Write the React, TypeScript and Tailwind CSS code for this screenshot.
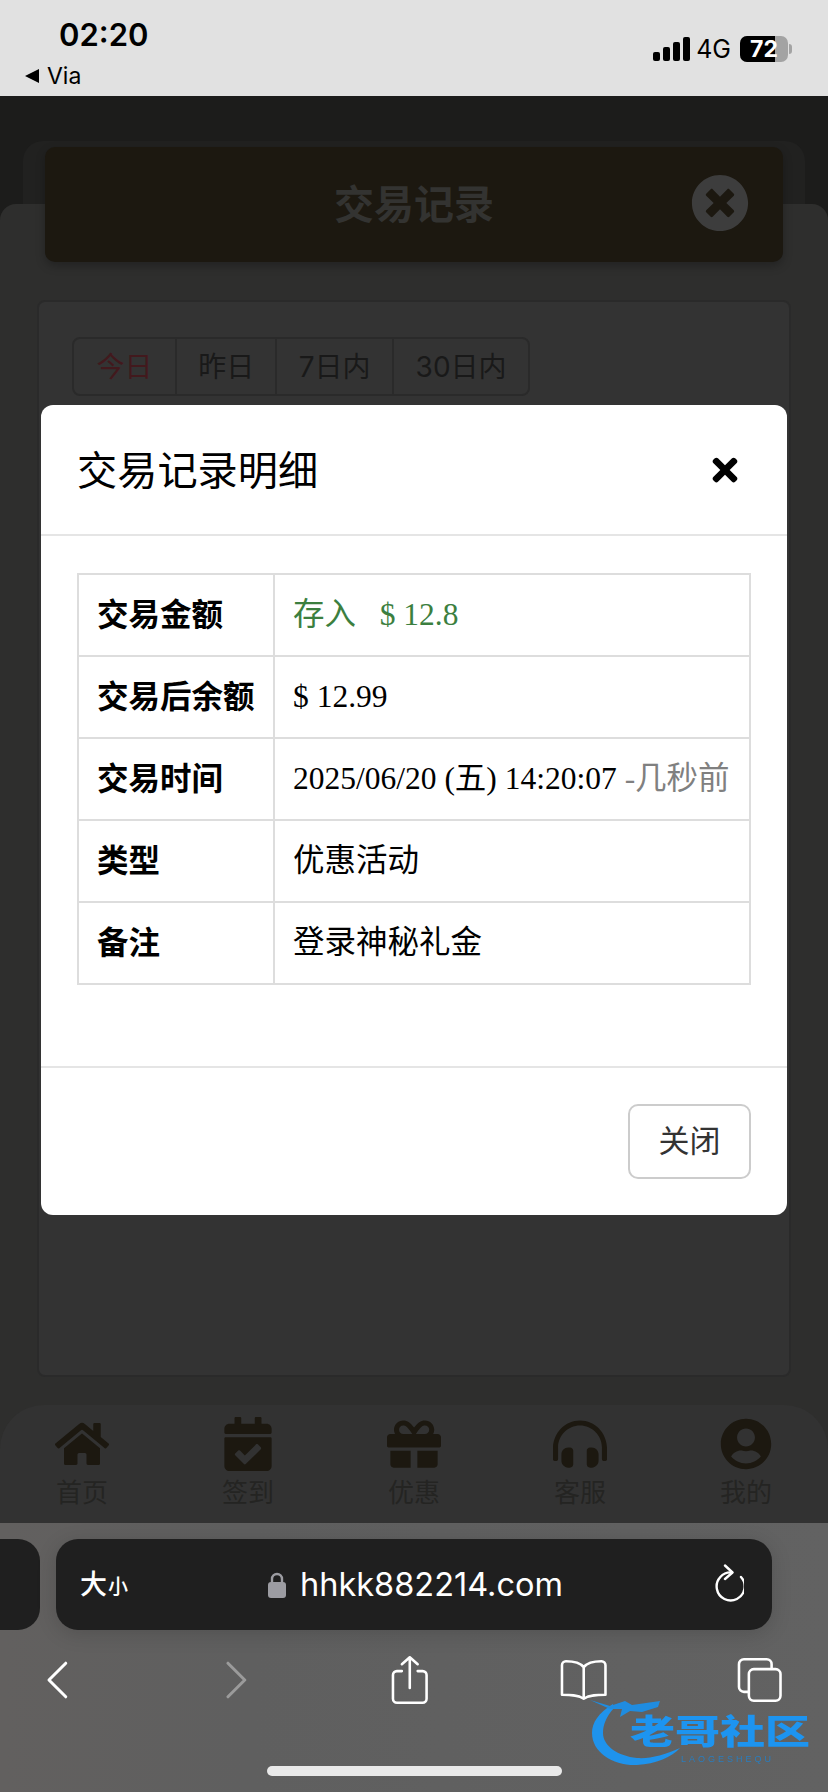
import { FaCalendarCheck, FaGift, FaHeadphonesAlt, FaHome, FaTimes, FaTimesCircle, FaUserCircle } from 'react-icons/fa';

const sans = "font-['Inter','Noto_Sans_CJK_SC',sans-serif]";

const navItems = [
  { label: '首页', Icon: FaHome, size: 'text-[54px]' },
  { label: '签到', Icon: FaCalendarCheck, size: 'text-[54px]' },
  { label: '优惠', Icon: FaGift, size: 'text-[54px]' },
  { label: '客服', Icon: FaHeadphonesAlt, size: 'text-[54px]' },
  { label: '我的', Icon: FaUserCircle, size: 'text-[52px]' },
];

const tabs = [
  { label: '今日', width: 'w-[104px]', color: 'text-[#42191d]' },
  { label: '昨日', width: 'w-[101px]', color: 'text-[#191919]' },
  { label: '7日内', width: 'w-[118px]', color: 'text-[#191919]' },
  { label: '30日内', width: 'w-[135px]', color: 'text-[#191919]' },
];

function StatusBar() {
  return (
    <div className="relative flex h-[96px] shrink-0 justify-between bg-[#e1e1e1] text-black">
      <div className="pl-[25px]">
        <div className="mt-[15px] pl-[34px] text-[31px] leading-[40px] font-semibold">02:20</div>
        <div className="mt-[8px] flex items-center gap-[8px] text-[23px] leading-[26px]">
          <span className="h-0 w-0 border-y-[7px] border-r-[14px] border-y-transparent border-r-black" />
          <span>Via</span>
        </div>
      </div>
      <div className="flex h-[62px] items-end pr-[36px]">
        <svg width="37" height="24" viewBox="0 0 37 24" className="mb-[1px]">
          <rect x="0" y="15" width="7" height="9" rx="2" />
          <rect x="10" y="10" width="7" height="14" rx="2" />
          <rect x="20" y="5" width="7" height="19" rx="2" />
          <rect x="30" y="0" width="7" height="24" rx="2" />
        </svg>
        <span className="ml-[6px] text-[25px] leading-[26px]">4G</span>
        <div className="relative ml-[9px] flex h-[26px] w-[48px] overflow-hidden rounded-[7px] bg-[#a3a3a3]">
          <div className="h-full w-[35px] bg-black" />
          <span className="absolute left-[10px] top-0 text-[23px] leading-[26px] font-bold text-white">72</span>
        </div>
        <div className="mb-[8px] ml-[1px] h-[10px] w-[3px] rounded-r-[3px] bg-[#a3a3a3]" />
      </div>
    </div>
  );
}

function PageBehind() {
  return (
    <div className="flex-1 bg-[#1c1c1b] pt-[45px]">
      <div className="mx-[23px] h-[63px] rounded-t-[20px] bg-[#212120]" />
      <div className="flex flex-col rounded-t-[16px] bg-[#2e2e2d]">
        <div className="relative mx-[45px] -mt-[57px] flex h-[115px] items-center justify-center rounded-[10px] bg-[#1c1810] shadow-[0_4px_10px_rgba(0,0,0,0.25)]">
          <span className="text-[40px] font-bold text-[#333331]">交易记录</span>
          <FaTimesCircle className="absolute right-[34px] top-[27px] text-[58px] text-[#3d3d3d]" />
        </div>
        <div className="mx-[37px] mt-[38px] h-[1077px] rounded-[8px] border-2 border-[#2a2a2a] bg-[#333333] px-[33px] pt-[35px]">
          <div className="flex h-[59px] w-[458px] rounded-[8px] border-2 border-[#2a2a2a]">
            {tabs.map((tab) => (
              <div key={tab.label} className={`flex items-center justify-center border-r-2 border-[#2a2a2a] text-[28px] last:border-r-0 ${tab.width} ${tab.color}`}>
                {tab.label}
              </div>
            ))}
          </div>
        </div>
        <div className="mt-[28px] flex h-[118px] justify-between rounded-t-[44px] bg-[#323232] px-[21px] pt-[10px]">
          {navItems.map(({ label, Icon, size }) => (
            <div key={label} className="flex w-[122px] flex-col items-center">
              <div className="flex h-[58px] items-center">
                <Icon className={`${size} text-[#1c1810]`} />
              </div>
              <span className="mt-[4px] text-[26px] leading-[32px] text-[#242422]">{label}</span>
            </div>
          ))}
        </div>
      </div>
    </div>
  );
}

function BrowserChrome() {
  return (
    <div className="relative h-[269px] shrink-0 bg-[linear-gradient(90deg,#62605f_0%,#5f5f5f_30%,#626262_100%)] pt-[16px] text-white">
      <div className="flex h-[91px] gap-[16px]">
        <div className="h-full w-[40px] rounded-r-[22px] bg-[#1f1f1f]" />
        <div className="relative flex h-full w-[716px] items-center justify-center rounded-[22px] bg-[#1f1f1f] shadow-[0_4px_20px_rgba(0,0,0,0.15)]">
          <div className="absolute left-[24px] top-[30px] flex items-end gap-[1px] font-['Noto_Sans_CJK_SC',sans-serif] leading-none font-medium">
            <span className="text-[27px]">大</span>
            <span className="text-[20px]">小</span>
          </div>
          <div className="flex items-center gap-[14px] pl-[3px]">
            <svg width="18" height="26" viewBox="0 0 18 26" fill="#9c9ca2">
              <path d="M4 11V7a5 5 0 0 1 10 0v4" fill="none" stroke="#9c9ca2" strokeWidth="2.4" />
              <rect x="0" y="10" width="18" height="16" rx="3" />
            </svg>
            <span className="text-[32.5px] leading-[40px]">hhkk882214.com</span>
          </div>
          <svg width="32" height="38" viewBox="0 0 32 38" fill="none" stroke="white" strokeWidth="2.4" strokeLinecap="round" strokeLinejoin="round" className="absolute right-[28px] top-[25px]">
            <path d="M20 8.5A14 14 0 1 0 29 13" />
            <path d="M13 1.5l7.5 7-7.5 6.5" />
          </svg>
        </div>
      </div>
      <div className="mt-[25px] flex h-[50px] w-[828px] items-center px-[46px]">
        <svg width="22" height="38" viewBox="0 0 22 38" fill="none" stroke="white" strokeWidth="3" strokeLinecap="round" strokeLinejoin="round">
          <path d="M20 2L3 19l17 17" />
        </svg>
        <svg width="22" height="38" viewBox="0 0 22 38" fill="none" stroke="#9b9b9b" strokeWidth="3" strokeLinecap="round" strokeLinejoin="round" className="ml-[158px]">
          <path d="M2 2l17 17L2 36" />
        </svg>
        <svg width="40" height="50" viewBox="0 0 40 50" fill="none" stroke="white" strokeWidth="2.6" strokeLinecap="round" strokeLinejoin="round" className="ml-[142px]">
          <path d="M12 16H7a4 4 0 0 0-4 4v24a4 4 0 0 0 4 4h26a4 4 0 0 0 4-4V20a4 4 0 0 0-4-4h-5" />
          <path d="M20 33V2M12 9l8-7 8 7" />
        </svg>
        <svg width="48" height="42" viewBox="0 0 48 42" fill="none" stroke="white" strokeWidth="2.6" strokeLinecap="round" strokeLinejoin="round" className="ml-[131px]">
          <path d="M24 8C20 3 14 2 6 2a4 4 0 0 0-4 4v30c8 0 16 0 22 4 6-4 14-4 22-4V6a4 4 0 0 0-4-4c-8 0-14 1-18 6zM24 8v32" />
        </svg>
        <svg width="46" height="46" viewBox="0 0 46 46" fill="none" stroke="white" strokeWidth="2.6" strokeLinejoin="round" className="ml-[129px]">
          <rect x="12" y="12" width="32" height="32" rx="5" />
          <path d="M12 35H7a5 5 0 0 1-5-5V7a5 5 0 0 1 5-5h23a5 5 0 0 1 5 5v5" />
        </svg>
      </div>
      <div className="mx-auto mt-[61px] h-[10px] w-[295px] rounded-full bg-[#e9e9e9]" />
      <div className="absolute left-[590px] top-[176px] h-[68px] w-[224px] blur-[0.7px]">
        <svg width="120" height="68" viewBox="0 0 120 68" className="absolute left-0 top-0">
          <path d="M23 5C8 14 2 24 2 34c0 20 22 33 45 32 19-1 35-8 43-17-16 7-30 11-43 10C28 57 13 47 13 34c0-8 3-16 11-25z" fill="#1f93ec" />
          <path d="M0 1l20 6 15-5 7 4 28-4-2 6-16 5-12-1-10 6 2-8-12 0z" fill="#1f8ce0" />
        </svg>
        <span className="absolute left-[40px] top-[16px] origin-center scale-y-[0.75] font-['Noto_Sans_CJK_SC',sans-serif] text-[45px] leading-[30px] font-black whitespace-nowrap text-[#1d94f0]">老哥社区</span>
        <span className="absolute left-[91px] top-[56px] font-['Liberation_Sans',sans-serif] text-[9px] leading-[9px] tracking-[3px] text-[#2a7dbd]">LAOGESHEQU</span>
      </div>
    </div>
  );
}

function DetailRow({ label, children }: { label: string; children: React.ReactNode }) {
  return (
    <tr className="h-[82px]">
      <th className={`w-[196px] border-2 border-[#dddddd] pl-[18px] text-left text-[31.5px] font-bold whitespace-nowrap ${sans}`}>{label}</th>
      <td className="border-2 border-[#dddddd] pl-[18px] text-[31.5px] whitespace-nowrap">{children}</td>
    </tr>
  );
}

function DetailModal() {
  return (
    <div className="absolute left-[41px] top-[405px] flex h-[810px] w-[746px] flex-col rounded-[12px] bg-white text-black">
      <div className="flex h-[131px] items-center justify-between border-b-2 border-[#e5e5e5] pl-[36px] pr-[44px]">
        <span className="pt-[2px] text-[40.2px] leading-[50px]">交易记录明细</span>
        <FaTimes className="text-[36px]" />
      </div>
      <div className="flex-1 pl-[36px] pt-[37px]">
        <table className="w-[674px] border-collapse font-['Liberation_Serif','Noto_Sans_CJK_SC',serif]">
          <tbody>
            <DetailRow label="交易金额">
              <span className="text-[#3c7f3f]">存入&nbsp;&nbsp; $ 12.8</span>
            </DetailRow>
            <DetailRow label="交易后余额">$ 12.99</DetailRow>
            <DetailRow label="交易时间">
              2025/06/20 (五) 14:20:07 <span className="text-[#808080]">-几秒前</span>
            </DetailRow>
            <DetailRow label="类型">优惠活动</DetailRow>
            <DetailRow label="备注">登录神秘礼金</DetailRow>
          </tbody>
        </table>
      </div>
      <div className="flex h-[149px] justify-end border-t-2 border-[#e5e5e5] pr-[36px] pt-[36px]">
        <button className="h-[75px] w-[123px] rounded-[10px] border-2 border-[#cccccc] text-[31px] text-[#333333]">关闭</button>
      </div>
    </div>
  );
}

export default function App() {
  return (
    <div className={`relative flex h-[1792px] w-[828px] flex-col overflow-hidden ${sans}`}>
      <StatusBar />
      <PageBehind />
      <BrowserChrome />
      <DetailModal />
    </div>
  );
}
